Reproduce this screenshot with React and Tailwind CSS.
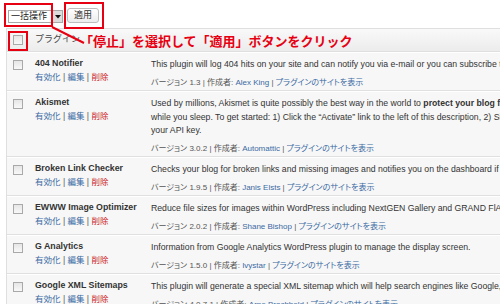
import React from "react";

const plugins = [
  {
    name: "404 Notifier",
    desc: [
      "This plugin will log 404 hits on your site and can notify you via e-mail or you can subscribe to the generated log via an RSS feed of 404 events.",
    ],
    ver: "1.3",
    author: "Alex King",
  },
  {
    name: "Akismet",
    desc: [
      <>
        Used by millions, Akismet is quite possibly the best way in the world to{" "}
        <b>protect your blog from comment and trackback spam</b>. It keeps your site protected from spam even
      </>,
      "while you sleep. To get started: 1) Click the \u201CActivate\u201D link to the left of this description, 2) Sign up for an Akismet API key, and 3) Go to your Akismet configuration page, and save",
      "your API key.",
    ],
    ver: "3.0.2",
    author: "Automattic",
  },
  {
    name: "Broken Link Checker",
    desc: [
      "Checks your blog for broken links and missing images and notifies you on the dashboard if any are found.",
    ],
    ver: "1.9.5",
    author: "Janis Elsts",
  },
  {
    name: "EWWW Image Optimizer",
    desc: [
      "Reduce file sizes for images within WordPress including NextGEN Gallery and GRAND FlAGallery. Uses jpegtran, optipng, and gifsicle.",
    ],
    ver: "2.0.2",
    author: "Shane Bishop",
  },
  {
    name: "G Analytics",
    desc: ["Information from Google Analytics WordPress plugin to manage the display screen."],
    ver: "1.5.0",
    author: "Ivystar",
  },
  {
    name: "Google XML Sitemaps",
    desc: [
      "This plugin will generate a special XML sitemap which will help search engines like Google, Yahoo, Bing and Ask.com to better index your blog.",
    ],
    ver: "4.0.7.1",
    author: "Arne Brachhold",
  },
];

function Checkbox() {
  return (
    <div className="w-[10px] h-[10px] border border-[#a9a9a9] bg-gradient-to-b from-[#e6e6e6] to-[#f8f8f8] shrink-0" />
  );
}

export default function App() {
  return (
    <div
      className="relative w-[500px] h-[304px] overflow-hidden bg-white text-[#333]"
      style={{ fontFamily: '"Liberation Sans", "Noto Sans CJK JP", sans-serif' }}
    >
      {/* tablenav */}
      <div className="h-[28px] flex items-start pl-[8px]">
        <div className="mt-[10px] flex h-[13px] border border-[#a8a8a8] bg-white">
          <div className="w-[43px] text-[9px] leading-[11px] pl-[2px] text-[#222]">一括操作</div>
          <div className="w-[10px] bg-[#dcdcdc] border-l border-[#a8a8a8] flex items-center justify-center">
            <svg width="6" height="4" viewBox="0 0 6 4">
              <path d="M0 0 L6 0 L3 3.5 Z" fill="#111" />
            </svg>
          </div>
        </div>
        <div className="ml-[4px] mt-[8px] w-[32px] h-[15px] rounded-[3px] border border-[#bdbdbd] bg-gradient-to-b from-white to-[#ececec] flex items-center justify-center text-[9px] leading-none text-[#333]">
          適用
        </div>
      </div>

      {/* table */}
      <div className="ml-[6px] w-[700px] border-l border-[#dfdfdf]">
        <div className="h-[24px] flex items-center border-t border-b border-[#dfdfdf] bg-gradient-to-b from-[#f9f9f9] to-[#ececec]">
          <div className="w-[22px] pl-[6px] flex">
            <Checkbox />
          </div>
          <div className="pl-[6px] text-[9px] text-[#444]">プラグイン</div>
        </div>

        {plugins.map((p) => (
          <div key={p.name} className="flex bg-[#f7f7f7] border-t border-white border-b border-b-[#e0e0e0]">
            <div className="w-[22px] pl-[6px] pt-[7px] shrink-0">
              <Checkbox />
            </div>
            <div className="w-[116px] pl-[6px] pt-[4px] shrink-0">
              <div className="text-[8.8px] leading-[13px] font-bold text-[#333] whitespace-nowrap">{p.name}</div>
              <div className="text-[8.5px] leading-[13px] mt-[1px] whitespace-nowrap">
                <span className="text-[#3b6aa3]">有効化</span>
                <span className="text-[#555]"> | </span>
                <span className="text-[#3b6aa3]">編集</span>
                <span className="text-[#555]"> | </span>
                <span className="text-[#cc1f1f]">削除</span>
              </div>
            </div>
            <div className="pl-[6px] pt-[5px] pb-[1px] text-[8.7px] [font-feature-settings:'palt']">
              {p.desc.map((d, i) => (
                <div key={i} className="leading-[13.5px] whitespace-nowrap text-[#333]">
                  {d}
                </div>
              ))}
              <div className="mt-[4px] leading-[13.5px] whitespace-nowrap text-[#555] text-[8px]">
                バージョン {p.ver} | 作成者: <span className="text-[#3b6aa3]">{p.author}</span> |{" "}
                <span className="text-[#3b6aa3]">プラグインのサイトを表示</span>
              </div>
            </div>
          </div>
        ))}
      </div>

      {/* annotations */}
      <div className="absolute left-[4px] top-[3px] w-[49px] h-[24px] border-2 border-[#e60012]" />
      <div className="absolute left-[64px] top-[2px] w-[40px] h-[27px] border-2 border-[#e60012]" />
      <div className="absolute left-[8px] top-[31px] w-[20px] h-[20px] border-2 border-[#e60012]" />
      <svg className="absolute left-0 top-0 pointer-events-none" width="500" height="60">
        <line x1="52" y1="27" x2="84" y2="43" stroke="#e60012" strokeWidth="2" />
      </svg>
      <div className="absolute left-[80px] top-[34px] text-[13px] leading-[15px] font-bold text-[#e60012] whitespace-nowrap">
        「停止」を選択して「適用」ボタンをクリック
      </div>
    </div>
  );
}
